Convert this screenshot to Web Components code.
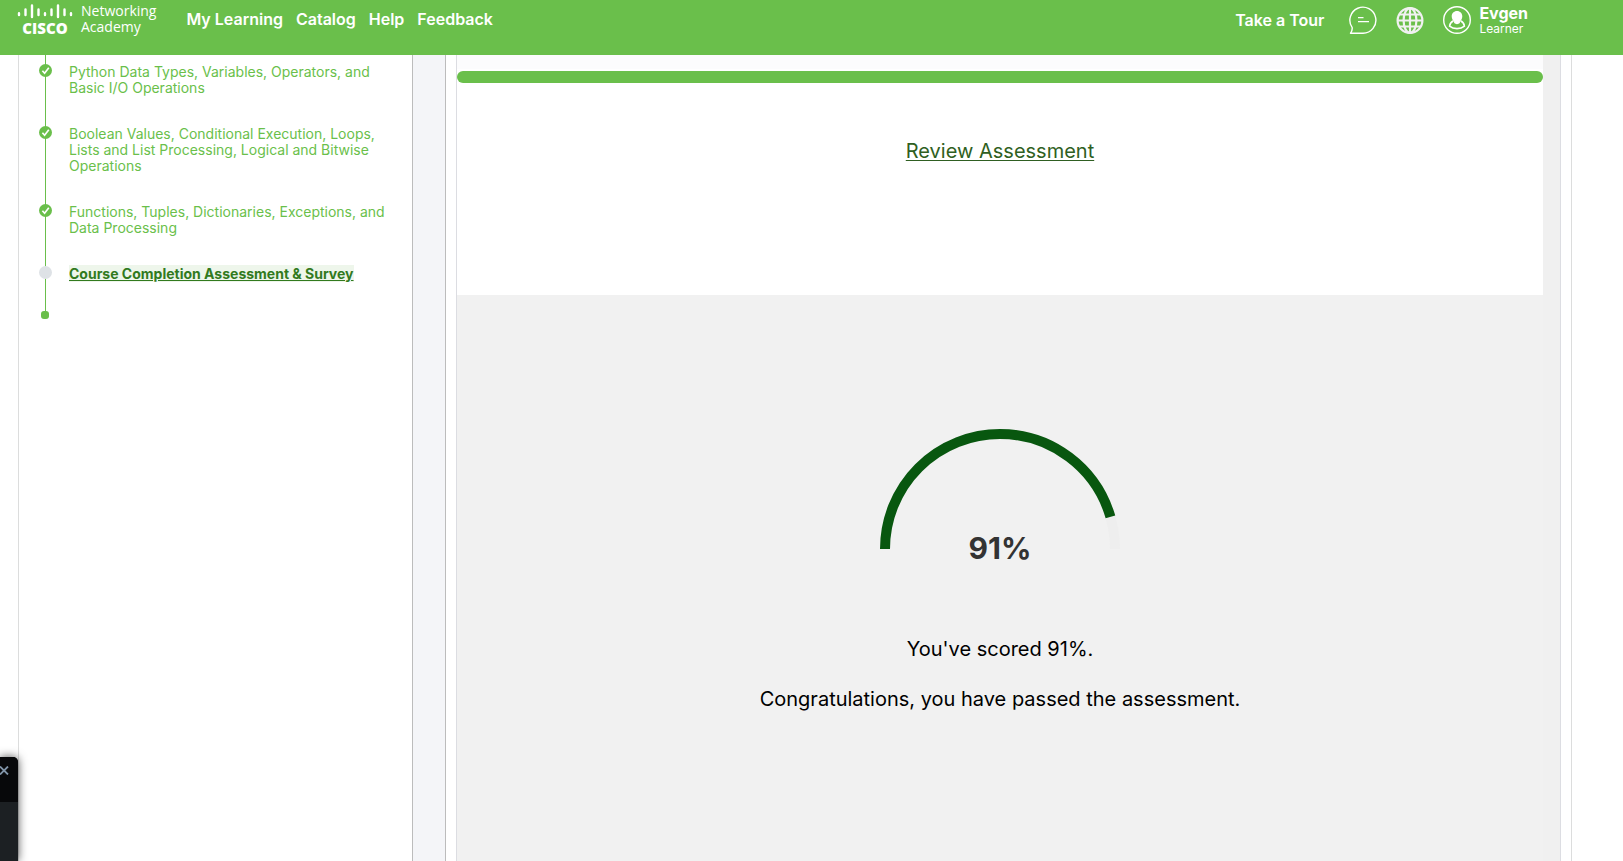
<!DOCTYPE html>
<html lang="en">
<head>
<meta charset="utf-8">
<title>Networking Academy</title>
<style>
  html, body { height: 100%; }
  body { margin: 0; background: #fff; font-family: Inter, "Liberation Sans", sans-serif; color: #000; overflow: hidden; }
</style>
</head>
<body>
<academy-app></academy-app>
<script>
  const define = (name, markup) => {
    const template = document.createElement('template');
    template.innerHTML = markup;
    customElements.define(name, class extends HTMLElement {
      constructor() {
        super();
        this.attachShadow({ mode: 'open' }).append(template.content.cloneNode(true));
      }
    });
  };

  define('academy-logo', `
    <style>
      :host { display: block; }
      a { display: flex; gap: 8px; color: #fff; text-decoration: none; }
      .mark { display: flex; flex-direction: column; align-items: center; width: 56px; }
      svg { display: block; }
      .cisco { font: 800 15px/18px "Open Sans", sans-serif; }
      .name { font: 400 14px/16px "Open Sans", sans-serif; }
    </style>
    <a href="#home">
      <span class="mark">
        <svg width="56" height="16" viewBox="0 0 56 16" fill="none" stroke="#fff" stroke-width="2.400" stroke-linecap="round" aria-hidden="true">
          <path d="M2 10.200v1.800M8.500 6.500v5.500M15 2.500v11.500M21.500 6.500v5.500M28 10.200v1.800M34.500 6.500v5.500M41 2.500v11.500M47.500 6.500v5.500M54 10.200v1.800"/>
        </svg>
        <span class="cisco">CISCO</span>
      </span>
      <span class="name">Networking<br>Academy</span>
    </a>`);

  define('nav-link', `
    <style>
      :host { display: block; line-height: 20px; }
      a { color: #fff; text-decoration: none; font-size: 16px; line-height: 20px; font-weight: 600; white-space: nowrap; }
    </style>
    <a href="#nav"><slot></slot></a>`);

  define('icon-button', `
    <style>
      :host { display: block; }
      button { display: block; padding: 0; border: 0; background: none; color: #fff; }
      ::slotted(svg) { display: block; }
    </style>
    <button type="button"><slot></slot></button>`);

  define('user-menu', `
    <style>
      :host { display: block; }
      button { display: flex; align-items: center; gap: 8px; padding: 0; border: 0; background: none; color: #fff; font-family: inherit; text-align: left; }
      .who { padding-top: 2px; }
      strong, small { display: block; }
      strong { font-size: 16px; line-height: 16px; font-weight: 700; }
      small { font-size: 12px; line-height: 16px; }
    </style>
    <button type="button">
      <svg width="28" height="28" viewBox="0 0 28 28" fill="none" stroke="#fff" aria-hidden="true">
        <circle cx="14" cy="14" r="13.300" stroke-width="1.400"/>
        <path stroke-width="1.600" stroke-linejoin="round" d="M10.500 14.800C8 16 6.800 18 6.600 20.200 8.500 21.800 11 22.600 14 22.600s5.500-.8 7.400-2.400c-.2-2.200-1.400-4.200-3.900-5.400"/>
        <path fill="#fff" stroke="none" d="M14 5c-3.100 0-5.300 2.300-5.300 5.200 0 2.200 1 4 2.400 5.200v1.700c1.600 1.500 4.200 1.500 5.800 0v-1.700c1.400-1.200 2.400-3 2.400-5.200C19.300 7.300 17.100 5 14 5z"/>
      </svg>
      <span class="who"><strong><slot name="name"></slot></strong><small><slot name="role"></slot></small></span>
    </button>`);

  define('academy-header', `
    <style>
      :host { display: block; background: #6abf4b; }
      header { display: flex; align-items: flex-start; height: 55px; padding: 0 95px 0 17px; box-sizing: border-box; }
      academy-logo { padding-top: 3px; }
      nav { display: flex; gap: 13px; margin: 9px auto 0 30px; }
      .tools { display: flex; align-items: center; padding-top: 3px; }
      .tools nav-link { margin-right: 25px; }
      .tools icon-button { margin-right: 19px; }
    </style>
    <header>
      <academy-logo></academy-logo>
      <nav>
        <nav-link>My Learning</nav-link><nav-link>Catalog</nav-link><nav-link>Help</nav-link><nav-link>Feedback</nav-link>
      </nav>
      <div class="tools">
        <nav-link>Take a Tour</nav-link>
        <icon-button><svg width="28" height="28" viewBox="0 0 28 28" fill="none" stroke="#fff" stroke-width="1.400" aria-label="Messages">
          <path stroke-linejoin="round" d="M1.500 27.200c1.200-1.500 1.900-3.400 1.700-5.600A13 13 0 1 1 14 27.200z"/><path d="M9 11.600h5.500M9 15.600h11"/></svg></icon-button>
        <icon-button><svg width="28" height="28" viewBox="0 0 28 28" fill="none" stroke="#f1f1f1" stroke-width="2.200" aria-label="Language">
          <circle cx="14" cy="14.500" r="12.400"/><ellipse cx="14" cy="14.500" rx="6.400" ry="12.400"/><path d="M14 2v25M1.500 14.500h25M3.500 8.500h21M3.500 20.500h21"/></svg></icon-button>
        <user-menu><span slot="name">Evgen</span><span slot="role">Learner</span></user-menu>
      </div>
    </header>`);

  define('module-step', `
    <style>
      :host { display: grid; grid-template-columns: 13px 1fr; column-gap: 17px; padding-bottom: 30px; font-size: 14px; line-height: 16px; }
      .dot { width: 13px; height: 13px; }
      svg { display: block; }
      a { color: #6abf4b; text-decoration: none; }
      :host([current]) .dot { border-radius: 50%; background: #dee2e6; }
      :host([current]) svg { display: none; }
      :host([current]) a { color: #327a1e; background: #eef6eb; font-weight: 700; text-decoration: underline; }
    </style>
    <span class="dot"><svg width="13" height="13" viewBox="0 0 13 13" aria-hidden="true"><circle cx="6.500" cy="6.500" r="6.500" fill="#6abf4b"/><path d="M3.400 6.800l2.200 2.400 4.200-5.400" fill="none" stroke="#fff" stroke-width="1.700"/></svg></span>
    <span class="text"><a href="#module"><slot></slot></a></span>`);

  define('module-outline', `
    <style>
      :host { display: block; }
      nav { padding: 9px 24px 0 20px; background: linear-gradient(#6abf4b, #6abf4b) 26px 0 / 1px 100% no-repeat; }
      .end { width: 8px; height: 8px; margin: -1px 0 0 22px; border-radius: 3px; background: #6abf4b; }
    </style>
    <nav aria-label="Modules">
      <module-step>Python Data Types, Variables, Operators, and Basic I/O Operations</module-step>
      <module-step>Boolean Values, Conditional Execution, Loops, Lists and List Processing, Logical and Bitwise Operations</module-step>
      <module-step>Functions, Tuples, Dictionaries, Exceptions, and Data Processing</module-step>
      <module-step current>Course Completion Assessment &amp; Survey</module-step>
    </nav>
    <div class="end"></div>`);

  define('score-gauge', `
    <style>
      :host { display: flex; flex-direction: column; align-items: center; }
      svg { display: block; }
      strong { margin-top: -19px; font-size: 30px; line-height: 36px; font-weight: 700; color: #333; }
    </style>
    <svg width="240" height="120" viewBox="0 0 240 120" fill="none" stroke-width="10" aria-hidden="true">
      <path stroke="#eee" d="M5 120a115 115 0 0 1 230 0"/>
      <path stroke="#08570f" pathLength="100" stroke-dasharray="91 100" d="M5 120a115 115 0 0 1 230 0"/>
    </svg>
    <strong><slot></slot></strong>`);

  define('assessment-result', `
    <style>
      :host { display: flex; border: solid #dcdde2; border-width: 0 1px; background: #f0f0f0; }
      .content { flex: 1; display: flex; flex-direction: column; margin-right: 17px; text-align: center; font-size: 20px; line-height: 26px; }
      .top { height: 14px; background: #fcfcfd; }
      .review { height: 226px; padding-top: 2px; box-sizing: border-box; background: #fff; }
      .bar { height: 12px; border-radius: 6px; background: #6abf4b; }
      .review a { display: inline-block; margin-top: 55px; color: #2f5f22; text-underline-offset: 2px; text-decoration-thickness: 1px; }
      .score { flex: 1; padding-top: 134px; background: #f1f1f1; }
      p { margin: 0 0 24px; }
      score-gauge { margin-bottom: 70px; }
    </style>
    <section class="content">
      <div class="top"></div>
      <div class="review"><div class="bar"></div><a href="#review">Review Assessment</a></div>
      <div class="score">
        <score-gauge>91%</score-gauge>
        <p>You've scored 91%.</p>
        <p>Congratulations, you have passed the assessment.</p>
      </div>
    </section>`);

  define('floating-window', `
    <style>
      :host { position: fixed; left: 0; bottom: 0; width: 18px; height: 104px; border-radius: 0 5px 0 0; background: #1c2023; box-shadow: 0 0 10px rgba(0, 0, 0, .7); }
      .bar { height: 45px; border-radius: 0 5px 0 0; background: #07080a; }
      button { display: block; padding: 9px 0 0; border: 0; background: none; }
      svg { display: block; }
    </style>
    <div class="bar"><button type="button" aria-label="Close"><svg width="9" height="9" viewBox="0 0 9 9"><path d="M0 .5l8 8M8 .5l-8 8" stroke="#8094a8" stroke-width="1.800"/></svg></button></div>`);

  define('academy-app', `
    <style>
      :host { display: flex; flex-direction: column; min-height: 100vh; }
      main { flex: 1; display: flex; margin: 0 51px 0 18px; border: solid #dcdddd; border-width: 0 1px; }
      module-outline { flex: 0 0 393px; }
      .divider { flex: 0 0 32px; margin-right: 10px; border: solid #bcbcbc; border-width: 0 1px; background: #f4f5f8; }
      assessment-result { flex: 1; margin-right: 10px; }
    </style>
    <academy-header></academy-header>
    <main>
      <module-outline></module-outline>
      <div class="divider"></div>
      <assessment-result></assessment-result>
    </main>
    <floating-window></floating-window>`);
</script>
</body>
</html>
